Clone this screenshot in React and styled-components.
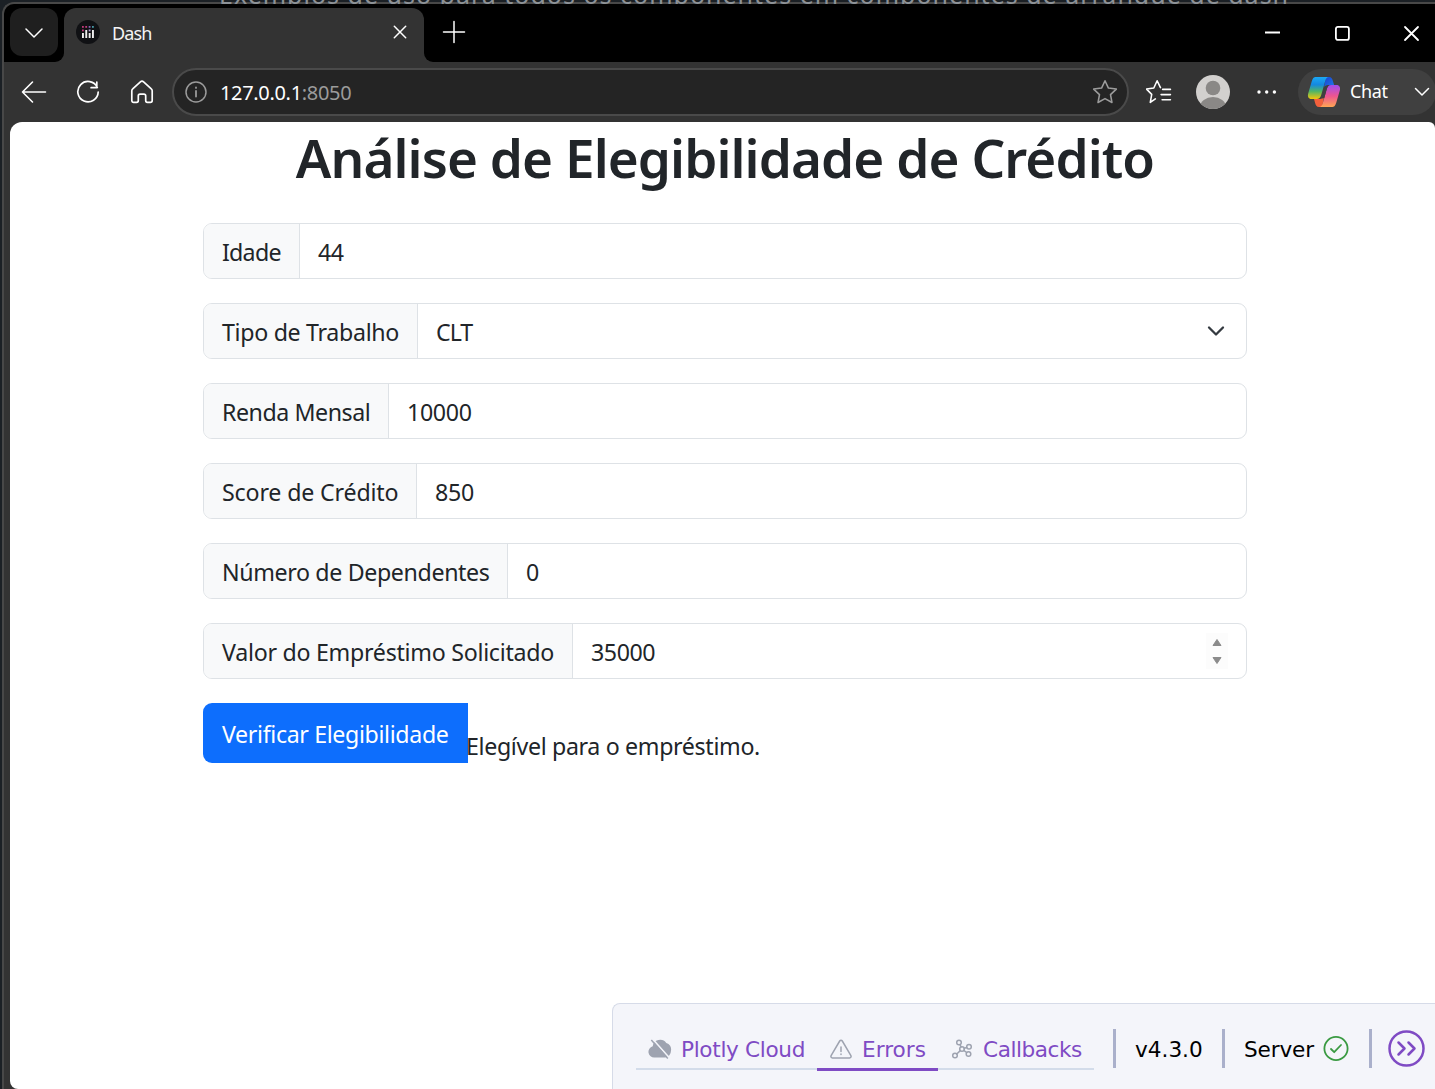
import React from "react";
import styled, { createGlobalStyle } from "styled-components";

const ui = `"Noto Sans", "Open Sans", sans-serif`;
const dev = `"DejaVu Sans", Verdana, sans-serif`;

const Global = createGlobalStyle`
  * { box-sizing: border-box; }
  html, body { margin: 0; padding: 0; background: #1b2025; overflow: hidden; }
  svg { display: block; flex: none; }
`;

const Desktop = styled.div`
  width: 1435px;
  height: 1089px;
  display: flex;
  flex-direction: column;
  overflow: hidden;
  background: #1b2025;
`;

const Behind = styled.div`
  position: relative;
  z-index: 1;
  height: 4px;
  margin-bottom: -2px;
  flex: none;
  overflow: hidden;
  padding-left: 219px;
`;

const BehindText = styled.div`
  margin-top: -21px;
  font: 25px/30px ${ui};
  letter-spacing: ${(p) => p.$ls}px;
  white-space: nowrap;
  color: #8d9297;
`;

const Window = styled.div`
  flex: 1;
  display: flex;
  flex-direction: column;
  margin-left: 2px;
  border: solid #484848;
  border-width: 2px 0 0 2px;
  border-top-left-radius: 12px;
  background: #333333;
  overflow: hidden;
`;

const TitleBar = styled.div`
  height: 58px;
  flex: none;
  display: flex;
`;

const TabActions = styled.div`
  width: 60px;
  background: #000;
  border-bottom-right-radius: 9px;
  padding: 4px 0 0 6px;
`;

const TabMenu = styled.div`
  width: 48px;
  height: 48px;
  border-radius: 12px;
  background: #1f1f1f;
  display: grid;
  place-items: center;
  padding-top: 2px;
`;

const TabSlot = styled.div`
  width: 360px;
  padding-top: 4px;
  background: linear-gradient(#000 0 24px, #333 24px);
`;

const Tab = styled.div`
  height: 54px;
  border-radius: 12px 12px 0 0;
  background: #333333;
  display: flex;
  align-items: center;
  padding: 0 15px 6px 12px;
`;

const TabTitle = styled.div`
  flex: 1;
  margin-left: 12px;
  padding-top: 2px;
  font: 18px/24px ${ui};
  letter-spacing: ${(p) => p.$ls}px;
  color: #f4f4f4;
`;

const TitleRest = styled.div`
  flex: 1;
  background: #000;
  border-bottom-left-radius: 9px;
  display: flex;
  align-items: center;
  justify-content: space-between;
  padding: 0 15px 2px 18px;
`;

const WindowButtons = styled.div`
  display: flex;
  gap: 52.500px;
  padding-top: 2px;
`;

const Toolbar = styled.div`
  height: 60px;
  flex: none;
  display: flex;
  align-items: center;
`;

const NavIcons = styled.div`
  width: 168px;
  flex: none;
  padding-left: 16px;
  display: flex;
  gap: 26px;
`;

const Address = styled.div`
  width: 957px;
  flex: none;
  height: 48px;
  border: 2px solid #4a4a4a;
  border-radius: 24px;
  background: #242424;
  display: flex;
  align-items: center;
  padding: 0 9px 0 10px;
`;

const Url = styled.div`
  flex: 1;
  margin-left: 12px;
  padding-top: 1px;
  font: 20px/28px ${ui};
  letter-spacing: ${(p) => p.$ls}px;
  color: #fff;
  span { color: #9b9b9b; }
`;

const Tools = styled.div`
  display: flex;
  align-items: center;
  gap: 24px;
  margin-left: 17px;
  width: 152px;
  flex: none;
`;

const Chat = styled.div`
  width: 138px;
  flex: none;
  height: 46px;
  border-radius: 23px;
  background: #404040;
  display: flex;
  align-items: center;
  padding: 0 6px 0 9px;
`;

const ChatLabel = styled.div`
  flex: 1;
  margin-left: 9px;
  padding-bottom: 2px;
  font: 18px/24px ${ui};
  letter-spacing: ${(p) => p.$ls}px;
  color: #fff;
`;

const Page = styled.main`
  flex: 1;
  margin-left: 6px;
  border-radius: 12px 6px 0 8px;
  background: #fff;
  display: flex;
  flex-direction: column;
  overflow: hidden;
  color: #212529;
  font: 23.2px/36px ${ui};
`;

const Form = styled.section`
  width: 1044px;
  margin-left: 193px;
`;

const Title = styled.h1`
  margin: 0;
  height: 101px;
  padding-top: 4px;
  text-align: center;
  white-space: nowrap;
  font: 600 53px/64px ${ui};
  letter-spacing: ${(p) => p.$ls}px;
`;

const Group = styled.div`
  height: 56px;
  margin-bottom: 24px;
  display: flex;
  border: 1px solid #dee2e6;
  border-radius: 9px;
  overflow: hidden;
`;

const Label = styled.div`
  width: ${(p) => p.$w}px;
  flex: none;
  padding: 10px 0 0 18px;
  border-right: 1px solid #dee2e6;
  background: #f8f9fa;
  white-space: nowrap;
  letter-spacing: ${(p) => p.$ls}px;
`;

const Value = styled.div`
  flex: 1;
  padding: 10px 0 0 18px;
  letter-spacing: ${(p) => p.$ls}px;
`;

const SelectArrow = styled.div`
  padding: 17px 18px 0 0;
`;

const Spinner = styled.div`
  width: 22px;
  height: 36px;
  margin: 9px 18px 0 0;
  background: #fcfcfc;
  display: grid;
  place-items: center;
`;

const Actions = styled.div`
  display: flex;
`;

const Submit = styled.button`
  width: 265px;
  height: 60px;
  border: 0;
  border-radius: 9px 0 0 9px;
  padding: 2px 0 0 19px;
  text-align: left;
  background: #0d6efd;
  color: #fff;
  white-space: nowrap;
  font: 23.2px/36px ${ui};
  letter-spacing: ${(p) => p.$ls}px;
`;

const Result = styled.div`
  padding-top: 25px;
  margin-left: -2px;
  white-space: nowrap;
  letter-spacing: ${(p) => p.$ls}px;
`;

const DevTools = styled.footer`
  width: 823px;
  height: 86px;
  margin-top: auto;
  align-self: flex-end;
  border: solid #d6dbe8;
  border-width: 1px 0 0 1px;
  border-top-left-radius: 8px;
  background: #f4f5fa;
  display: flex;
  padding: 25px 0 0 23px;
  font: 21.6px/38px ${dev};
  color: #000;
`;

const DevTabs = styled.div`
  width: 458px;
  display: flex;
`;

const DevTab = styled.div`
  width: ${(p) => p.$w}px;
  height: ${(p) => (p.$active ? 42 : 41)}px;
  border-bottom: ${(p) => (p.$active ? "3px solid #7f4bc4" : "2px solid #d3dcea")};
  display: flex;
  align-items: center;
  gap: ${(p) => p.$gap}px;
  padding-left: 12px;
  color: #7f4bc4;
  white-space: nowrap;
  letter-spacing: ${(p) => p.$ls}px;
`;

const DevLabel = styled.span`
  padding-top: 2px;
`;

const Divider = styled.div`
  width: 3px;
  height: 39px;
  flex: none;
  background: #aab0cb;
  margin: 0 ${(p) => p.$r}px 0 ${(p) => p.$l}px;
`;

const Status = styled.div`
  width: ${(p) => p.$w}px;
  display: flex;
  align-items: center;
  justify-content: space-between;
  height: 39px;
  white-space: nowrap;
  letter-spacing: ${(p) => p.$ls}px;
`;

const Line = ({ w, h, box, color = "#fff", sw = 1.5, children }) => (
  <svg width={w} height={h} viewBox={box || `0 0 ${w} ${h}`} fill="none" stroke={color}
    strokeWidth={sw} strokeLinecap="round" strokeLinejoin="round">{children}</svg>
);

const DashLogo = () => (
  <svg width="24" height="24" viewBox="0 0 24 24">
    <circle cx="12" cy="12" r="12" fill="#101114" />
    <g fill="#eee">
      <rect x="6" y="13" width="1.900" height="5" /><rect x="9.300" y="10" width="1.900" height="8" />
      <rect x="12.700" y="13" width="1.900" height="5" /><rect x="16" y="10" width="1.900" height="8" />
    </g>
    <g fill="#c23a7c">
      <rect x="6" y="6" width="1.800" height="1.800" /><rect x="6" y="9.500" width="1.800" height="1.800" />
      <rect x="9.300" y="6" width="1.800" height="1.800" />
    </g>
    <rect x="12.700" y="6" width="1.800" height="1.800" fill="#8168b5" />
    <rect x="12.700" y="9.500" width="1.800" height="1.800" fill="#b9a3dd" />
    <rect x="16" y="6" width="1.800" height="1.800" fill="#4799a6" />
  </svg>
);

const star = "M12 1.200l3.300 7 7.600 1-5.600 5.300 1.400 7.600L12 18.400 5.300 22.100l1.400-7.600L1.100 9.200l7.600-1z";

const Copilot = () => (
  <svg width="34" height="32" viewBox="0 0 34 32">
    <defs>
      <linearGradient id="cb" x1="0" y1="0" x2="0" y2="1">
        <stop offset="0" stopColor="#1ba8f5" /><stop offset=".35" stopColor="#1488e0" />
        <stop offset=".65" stopColor="#50b566" /><stop offset="1" stopColor="#f5c60a" />
      </linearGradient>
      <linearGradient id="cp" x1="0" y1="0" x2="0" y2="1">
        <stop offset="0" stopColor="#a04ef0" /><stop offset=".5" stopColor="#ee5590" />
        <stop offset="1" stopColor="#ffa653" />
      </linearGradient>
      <linearGradient id="cd" x1="0" y1="0" x2="1" y2="1">
        <stop offset="0" stopColor="#1a3fd0" /><stop offset="1" stopColor="#1f7be8" />
      </linearGradient>
    </defs>
    <path d="M19 1h3c2.500 0 3.300 1.700 3.900 4l1.200 4h-4.500c-2.500 0-4.600.5-5.600 2z" fill="url(#cd)" />
    <path d="M15 31h-3c-2.500 0-3.300-1.700-3.900-4L7 23h4.500c2.500 0 4.600-.5 5.600-2z" fill="#f2603c" />
    <path d="M9.500 1H22c-2 0-3 1.500-3.800 4l-4 14c-.8 2.700-2 4-4.500 4H4.500C1.500 23 .3 20.500 1.200 17.500L4.700 5.500C5.700 2.300 6.500 1 9.500 1z" fill="url(#cb)" />
    <path d="M24.500 31H12c2 0 3-1.500 3.800-4l4-14c.8-2.700 2-4 4.500-4h5.200c3 0 4.200 2.500 3.300 5.500l-3.500 12c-1 3.200-1.800 4.500-4.800 4.500z" fill="url(#cp)" />
    <path d="M19.300 9.800h2.200c-.8.900-1.300 2-1.700 3.200l-2.600 9.200h-2.500c.4-.7.700-1.400.9-2.200z" fill="#404040" />
  </svg>
);

const fields = [
  { label: "Idade", w: 96, value: "44", ls: -0.75, vls: -0.4 },
  { label: "Tipo de Trabalho", w: 214, value: "CLT", ls: -0.31, vls: -1, kind: "select" },
  { label: "Renda Mensal", w: 185, value: "10000", ls: -0.45, vls: -0.35 },
  { label: "Score de Crédito", w: 213, value: "850", ls: -0.16, vls: -0.3 },
  { label: "Número de Dependentes", w: 304, value: "0", ls: -0.36, vls: 0 },
  { label: "Valor do Empréstimo Solicitado", w: 369, value: "35000", ls: -0.27, vls: -0.45, kind: "number" },
];

export default function App() {
  return (
    <Desktop>
      <Global />
      <Behind>
        <BehindText $ls={1}>Exemplos de uso para todos os componentes em componentes de arranque de dash</BehindText>
      </Behind>
      <Window>
        <TitleBar>
          <TabActions>
            <TabMenu>
              <Line w={20} h={12}><path d="M2 2l8 8 8-8" /></Line>
            </TabMenu>
          </TabActions>
          <TabSlot>
            <Tab>
              <DashLogo />
              <TabTitle $ls={-0.85}>Dash</TabTitle>
              <Line w={18} h={18} sw={1.5}><path d="M3.300 3.300l11.400 11.400M14.700 3.300L3.300 14.700" /></Line>
            </Tab>
          </TabSlot>
          <TitleRest>
            <Line w={24} h={24}><path d="M12 1.500v21M1.500 12h21" /></Line>
            <WindowButtons>
              <Line w={17} h={17} sw={2}><path d="M1 7.500h15" strokeLinecap="butt" /></Line>
              <Line w={17} h={17} sw={1.8}><rect x="1.900" y="1.900" width="13" height="13" rx="2" /></Line>
              <Line w={17} h={17} sw={1.8}><path d="M2 2l13 13M15 2L2 15" /></Line>
            </WindowButtons>
          </TitleRest>
        </TitleBar>
        <Toolbar>
          <NavIcons>
            <Line w={28} h={24} sw={1.6}><path d="M25.500 12H2.500M12.500 2l-10 10 10 10" /></Line>
            <Line w={28} h={24} sw={1.7}><path d="M23.300 7.500a10.200 10.200 0 1 0 .9 4.500M22.800 2v5.700h-5.700" /></Line>
            <Line w={28} h={24} sw={1.7}><path d="M3.800 10.800c0-.8.300-1.500.9-2L12.400 1.900a2.400 2.400 0 0 1 3.200 0l7.700 6.900c.6.500.9 1.200.9 2v9.700c0 1-.8 1.800-1.800 1.800h-3c-1 0-1.700-.8-1.700-1.800v-4.700c0-1-.7-1.700-1.700-1.700h-4c-1 0-1.700.7-1.700 1.700v4.700c0 1-.7 1.800-1.700 1.800H5.600c-1 0-1.800-.8-1.800-1.800z" /></Line>
          </NavIcons>
          <Address>
            <Line w={24} h={24} color="#9b9b9b" sw={1.5}>
              <circle cx="12" cy="12" r="10" /><path d="M12 11v5.500M12 7.500v.4" strokeWidth="1.800" />
            </Line>
            <Url $ls={-0.33}>127.0.0.1<span>:8050</span></Url>
            <Line w={26} h={26} box="-0.500 -0.500 25 25" color="#9b9b9b"><path d={star} /></Line>
          </Address>
          <Tools>
            <Line w={26} h={26} box="0.500 -0.500 25 25">
              <path d="M9.500 18.600L4.600 22l1.400-7.700L1 9.200l7-1 3.200-7 3.200 6.600M16.500 9.500H24M15 14.500h9M16 19.500h8" />
            </Line>
            <svg width="34" height="34" viewBox="0 0 34 34">
              <clipPath id="avatar"><circle cx="17" cy="17" r="17" /></clipPath>
              <g clipPath="url(#avatar)">
                <rect width="34" height="34" fill="#d2d0ce" />
                <circle cx="17" cy="13" r="7.300" fill="#8a8886" />
                <ellipse cx="17" cy="32" rx="13" ry="10" fill="#8a8886" />
              </g>
            </svg>
            <svg width="26" height="6" viewBox="0 0 26 6" fill="#fff">
              <circle cx="5" cy="3" r="1.700" /><circle cx="12.700" cy="3" r="1.700" /><circle cx="20.400" cy="3" r="1.700" />
            </svg>
          </Tools>
          <Chat>
            <Copilot />
            <ChatLabel $ls={-0.4}>Chat</ChatLabel>
            <Line w={16} h={10} sw={1.5}><path d="M1.500 1.500L8 8l6.500-6.500" /></Line>
          </Chat>
        </Toolbar>
        <Page>
          <Form>
            <Title $ls={-0.92}>Análise de Elegibilidade de Crédito</Title>
            {fields.map((f) => (
              <Group key={f.label}>
                <Label $w={f.w} $ls={f.ls}>{f.label}</Label>
                <Value $ls={f.vls}>{f.value}</Value>
                {f.kind === "select" && (
                  <SelectArrow>
                    <Line w={24} h={20} color="#343a40" sw={2.3}><path d="M5 6.500l7 7 7-7" /></Line>
                  </SelectArrow>
                )}
                {f.kind === "number" && (
                  <Spinner>
                    <svg width="12" height="26" viewBox="0 0 12 26" fill="#8b8b8b" stroke="#8b8b8b" strokeLinejoin="round">
                      <path d="M6 1.500L10 7.500H2zM6 25.500L10 19.500H2z" />
                    </svg>
                  </Spinner>
                )}
              </Group>
            ))}
            <Actions>
              <Submit $ls={-0.36}>Verificar Elegibilidade</Submit>
              <Result $ls={-0.34}>Elegível para o empréstimo.</Result>
            </Actions>
          </Form>
          <DevTools>
            <DevTabs>
              <DevTab $w={181} $gap={9} $ls={-0.33}>
                <svg width="24" height="20" viewBox="0 0 24 20">
                  <path d="M6.500 18.500a5.700 5.700 0 0 1-1.800-11.200A7.500 7.500 0 0 1 18.300 4 6.500 6.500 0 0 1 23 11.500 6.800 6.800 0 0 1 17 18.500z" fill="#9ea3b0" />
                  <path d="M5 .5L21.500 19" stroke="#f4f5fa" strokeWidth="1.700" />
                  <path d="M3.300 1L19.800 19.500" stroke="#9ea3b0" strokeWidth="1.500" />
                </svg>
                <DevLabel>Plotly Cloud</DevLabel>
              </DevTab>
              <DevTab $w={121} $gap={9} $ls={0} $active>
                <Line w={24} h={20} color="#9ea3b0" sw={1.5}>
                  <path d="M12 1.200c.6 0 1 .3 1.300.8l8.600 14.700c.6 1-.1 2.200-1.300 2.200H3.400c-1.200 0-1.900-1.200-1.300-2.200L10.700 2c.3-.5.7-.8 1.300-.8zM12 8v4.500M12 15v.6" />
                </Line>
                <DevLabel>Errors</DevLabel>
              </DevTab>
              <DevTab $w={156} $gap={9} $ls={-0.45}>
                <Line w={24} h={20} color="#9ea3b0" sw={1.5}>
                  <circle cx="9" cy="3.500" r="2.300" /><circle cx="12" cy="10" r="2.300" />
                  <circle cx="19" cy="7.700" r="2.300" /><circle cx="18.500" cy="15" r="2.300" />
                  <circle cx="5" cy="16.500" r="2.300" />
                  <path d="M10 5.600l1 2.200M14.200 9.300l2.600-.8M13.800 11.400l2.800 2.100M10.300 11.600L6.700 15" />
                </Line>
                <DevLabel>Callbacks</DevLabel>
              </DevTab>
            </DevTabs>
            <Divider $l={19} $r={19} />
            <Status $w={68} $ls={0}><DevLabel>v4.3.0</DevLabel></Status>
            <Divider $l={19} $r={19} />
            <Status $w={106} $ls={-0.15}>
              <DevLabel>Server</DevLabel>
              <Line w={27} h={26} color="#3a9a42" sw={1.8}>
                <circle cx="13" cy="12.500" r="11.600" /><path d="M8 13l3.200 3.200L18 9" />
              </Line>
            </Status>
            <Divider $l={19} $r={16} />
            <Line w={37} h={39} color="#7f4bc4" sw={2.500}>
              <circle cx="18.500" cy="19.500" r="17" /><path d="M10.500 13.500l6 6-6 6M20.500 13.500l6 6-6 6" />
            </Line>
          </DevTools>
        </Page>
      </Window>
    </Desktop>
  );
}
